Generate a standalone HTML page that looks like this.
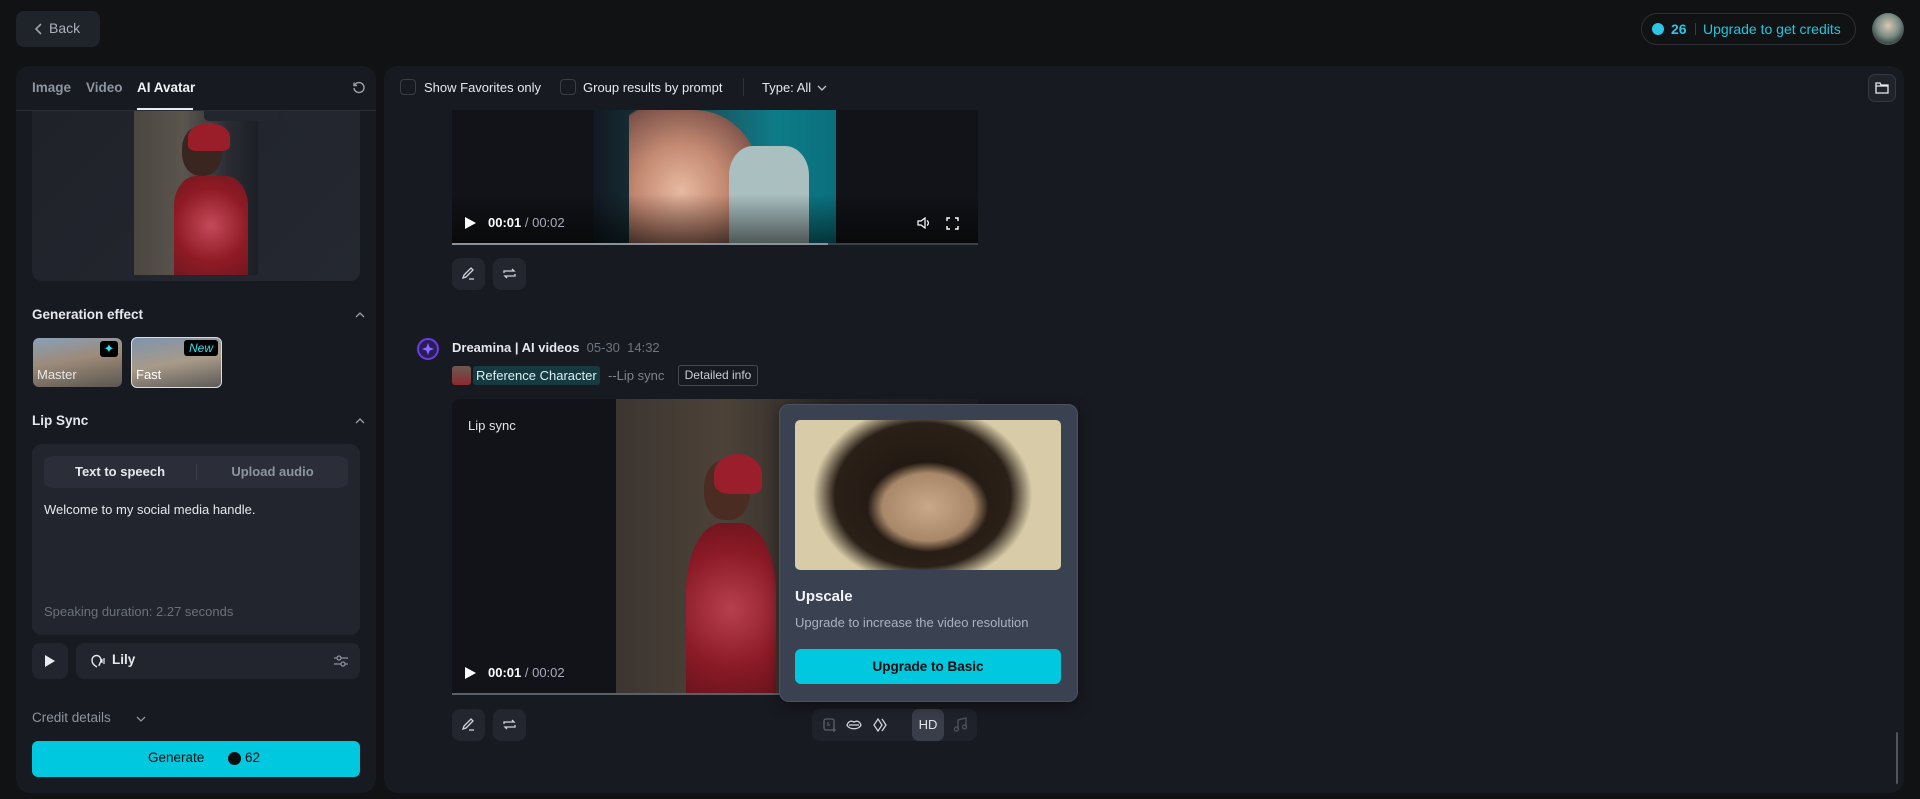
<!DOCTYPE html>
<html><head><meta charset="utf-8"><style>
*{box-sizing:border-box;margin:0;padding:0}
body{width:1920px;height:799px;background:#111214;font-family:"Liberation Sans",sans-serif;color:#e6e8ec;position:relative;overflow:hidden}
.a{position:absolute}
.t{white-space:nowrap}
.btn{background:#23262e;border-radius:8px}
svg{display:block}
</style></head><body>
<!-- back -->
<div class="a" style="left:16px;top:11px;width:84px;height:36px;background:#1f232a;border-radius:8px"></div>
<svg class="a" style="left:33px;top:22px" width="12" height="14" viewBox="0 0 12 14"><path d="M8 2L3 7l5 5" stroke="#9aa3ad" stroke-width="1.6" fill="none"/></svg>
<div class="a t" style="left:49px;top:20px;font-size:14px;color:#aab2bc">Back</div>
<!-- credits pill -->
<div class="a" style="left:1641px;top:13px;width:215px;height:32px;border:1px solid #2c2f36;border-radius:16px"></div>
<div class="a" style="left:1652px;top:23px;width:12px;height:12px;border-radius:50%;background:#2ec4e6"></div>
<div class="a t" style="left:1671px;top:21px;font-size:14px;font-weight:bold;color:#2ec4e6">26</div>
<div class="a" style="left:1695px;top:23px;width:1px;height:12px;background:#3a3d44"></div>
<div class="a t" style="left:1703px;top:21px;font-size:14px;color:#1ec8e0">Upgrade to get credits</div>
<div class="a" style="left:1872px;top:13px;width:32px;height:32px;border-radius:50%;background:radial-gradient(circle at 50% 40%,#d9c7b0 0,#7a8c84 45%,#3b4a48 70%,#bcd0c9 100%)"></div>

<!-- left panel -->
<div class="a" style="left:16px;top:66px;width:360px;height:727px;background:#181a21;border-radius:14px;overflow:hidden">
  <div class="a t" style="left:16px;top:14px;font-size:13.5px;font-weight:bold;color:#8c95a0">Image</div>
  <div class="a t" style="left:70px;top:14px;font-size:13.5px;font-weight:bold;color:#8c95a0">Video</div>
  <div class="a t" style="left:121px;top:14px;font-size:13.5px;font-weight:bold;color:#f0f2f5">AI Avatar</div>
  <div class="a" style="left:121px;top:42px;width:56px;height:2px;background:#e8ecf0"></div>
  <div class="a" style="left:0;top:44px;width:360px;height:1px;background:#2b2e36"></div>
  <svg class="a" style="left:336px;top:15px" width="14" height="14" viewBox="0 0 14 14"><path d="M3 3.5A5 5 0 1 1 2 7" stroke="#9aa3ad" stroke-width="1.4" fill="none"/><path d="M2 1.5v3h3" stroke="#9aa3ad" stroke-width="1.4" fill="none"/></svg>
  <div class="a" style="left:16px;top:45px;width:328px;height:170px;background:linear-gradient(135deg,#1f2229,#252831);border-radius:0 0 10px 10px"></div>
  <div class="a" style="left:118px;top:45px;width:124px;height:164px;background:linear-gradient(90deg,#4a4640 0,#5a564e 40%,#2a2d33 75%,#1c1f25 100%)"></div>
  <div class="a" style="left:166px;top:60px;width:40px;height:50px;border-radius:45%;background:#3a2620"></div>
  <div class="a" style="left:172px;top:57px;width:42px;height:28px;border-radius:50% 50% 20% 20%;background:#9a1e2a"></div>
  <div class="a" style="left:158px;top:110px;width:74px;height:99px;border-radius:30% 30% 0 0;background:radial-gradient(circle,#c44a5a 0,#8e1a24 60%,#701820 100%)"></div>
  <div class="a" style="left:188px;top:45px;width:74px;height:10px;background:#23262e;border-radius:0 0 5px 5px"></div>
  <div class="a" style="left:268px;top:45px;width:26px;height:10px;background:#23262e;border-radius:0 0 5px 5px"></div>

  <div class="a t" style="left:16px;top:241px;font-size:13.5px;font-weight:bold">Generation effect</div>
  <svg class="a" style="left:339px;top:245px" width="10" height="8"><path d="M1 6l4-4 4 4" stroke="#9aa3ad" stroke-width="1.3" fill="none"/></svg>
  <div class="a" style="left:17px;top:272px;width:89px;height:49px;border-radius:6px;background:linear-gradient(170deg,#8aa0b8 0,#9c8a78 45%,#5a5650 100%)"></div>
  <div class="a" style="left:84px;top:275px;width:18px;height:16px;background:#000;border-radius:3px;color:#2ee0f0;font-size:13px;text-align:center;line-height:16px">✦</div>
  <div class="a t" style="left:21px;top:301px;font-size:13px;color:#e8e8e8">Master</div>
  <div class="a" style="left:115px;top:271px;width:91px;height:51px;border-radius:6px;border:1.5px solid #d8dde3;background:linear-gradient(170deg,#7e94ae 0,#a89a88 50%,#5c5a58 100%)"></div>
  <div class="a t" style="left:168px;top:274px;width:34px;height:16px;background:#000;border-radius:3px;color:#2ee0f0;font-size:12px;font-style:italic;text-align:center;line-height:16px">New</div>
  <div class="a t" style="left:120px;top:301px;font-size:13px;color:#fff">Fast</div>

  <div class="a t" style="left:16px;top:347px;font-size:13.5px;font-weight:bold">Lip Sync</div>
  <svg class="a" style="left:339px;top:351px" width="10" height="8"><path d="M1 6l4-4 4 4" stroke="#9aa3ad" stroke-width="1.3" fill="none"/></svg>
  <div class="a" style="left:16px;top:378px;width:328px;height:191px;background:#22252d;border-radius:10px"></div>
  <div class="a" style="left:28px;top:390px;width:304px;height:32px;background:#2b2e38;border-radius:8px"></div>
  <div class="a" style="left:180px;top:398px;width:1px;height:16px;background:#3a3e48"></div>
  <div class="a t" style="left:28px;top:398px;width:152px;text-align:center;font-size:13px;font-weight:bold">Text to speech</div>
  <div class="a t" style="left:181px;top:398px;width:151px;text-align:center;font-size:13px;font-weight:bold;color:#8c95a0">Upload audio</div>
  <div class="a t" style="left:28px;top:436px;font-size:13px">Welcome to my social media handle.</div>
  <div class="a t" style="left:28px;top:538px;font-size:13px;color:#6a717c">Speaking duration: 2.27 seconds</div>
  <div class="a" style="left:16px;top:577px;width:36px;height:36px;background:#22252d;border-radius:8px"></div>
  <svg class="a" style="left:28px;top:589px" width="12" height="12"><path d="M1 0l10 6-10 6z" fill="#e8ecf0"/></svg>
  <div class="a" style="left:60px;top:577px;width:284px;height:36px;background:#22252d;border-radius:8px"></div>
  <svg class="a" style="left:72px;top:587px" width="18" height="16" viewBox="0 0 18 16"><path d="M9 14c-2-1-5-3-5-7a4.5 4.5 0 0 1 9 0c0 3-2 4-2 6" stroke="#e8ecf0" stroke-width="1.4" fill="none"/><path d="M14 6v4M16 5v6" stroke="#e8ecf0" stroke-width="1.2"/></svg>
  <div class="a t" style="left:96px;top:586px;font-size:13.5px;font-weight:bold">Lily</div>
  <svg class="a" style="left:317px;top:588px" width="16" height="14"><path d="M1 4h14M1 10h14" stroke="#8c95a0" stroke-width="1.2"/><circle cx="6" cy="4" r="2" fill="#22252d" stroke="#8c95a0" stroke-width="1.2"/><circle cx="10" cy="10" r="2" fill="#22252d" stroke="#8c95a0" stroke-width="1.2"/></svg>
  <div class="a t" style="left:16px;top:644px;font-size:13.5px;color:#8c95a0">Credit details</div>
  <svg class="a" style="left:120px;top:649px" width="10" height="8"><path d="M1 2l4 4 4-4" stroke="#8c95a0" stroke-width="1.3" fill="none"/></svg>
  <div class="a" style="left:16px;top:675px;width:328px;height:36px;background:#00c8de;border-radius:6px"></div>
  <div class="a t" style="left:132px;top:684px;font-size:13.5px;color:#0b0d10">Generate</div>
  <div class="a" style="left:212px;top:686px;width:13px;height:13px;border-radius:50%;background:#0b0d10"></div>
  <div class="a t" style="left:229px;top:684px;font-size:13.5px;color:#0b0d10">62</div>
</div>

<!-- main panel -->
<div class="a" style="left:384px;top:66px;width:1520px;height:727px;background:#181a21;border-radius:14px;overflow:hidden">
  <!-- top video -->
  <div class="a" style="left:68px;top:44px;width:526px;height:134px;background:#121318"></div>
  <div class="a" style="left:209px;top:44px;width:243px;height:134px;background:linear-gradient(90deg,#111820 0,#1d4a52 40%,#0e7c88 75%,#0a6f7c 100%)"></div>
  <div class="a" style="left:245px;top:44px;width:130px;height:134px;border-radius:0 50% 0 0;background:radial-gradient(ellipse at 40% 60%,#e8b8a0 0,#c48a72 40%,#7a5048 80%,transparent 82%)"></div>
  <div class="a" style="left:345px;top:80px;width:80px;height:98px;border-radius:30% 30% 0 0;background:#a9bfc0"></div>
  <div class="a" style="left:68px;top:128px;width:526px;height:50px;background:linear-gradient(180deg,transparent,rgba(0,0,0,.55))"></div>
  <svg class="a" style="left:81px;top:151px" width="11" height="12"><path d="M0 0l11 6-11 6z" fill="#fff"/></svg>
  <div class="a t" style="left:104px;top:149px;font-size:13px;font-weight:bold;color:#fff">00:01 <span style="font-weight:normal;color:#aab">/ 00:02</span></div>
  <svg class="a" style="left:533px;top:151px" width="14" height="12"><path d="M1 4h3l4-3v10l-4-3H1z" stroke="#fff" stroke-width="1.2" fill="none"/><path d="M10 3.5a3 3 0 0 1 0 5" stroke="#fff" stroke-width="1.2" fill="none"/></svg>
  <svg class="a" style="left:562px;top:151px" width="13" height="13"><path d="M1 4V1h3M9 1h3v3M12 9v3H9M4 12H1V9" stroke="#fff" stroke-width="1.4" fill="none"/></svg>
  <div class="a" style="left:68px;top:177px;width:526px;height:2px;background:#3a3f48"></div>
  <div class="a" style="left:68px;top:177px;width:376px;height:2px;background:#8a929c"></div>
  <div class="a btn" style="left:68px;top:192px;width:33px;height:32px"></div>
  <svg class="a" style="left:77px;top:200px" width="15" height="15"><path d="M2 12l1-3 7-7 2 2-7 7zM8 13h5" stroke="#d0d5dc" stroke-width="1.3" fill="none"/></svg>
  <div class="a btn" style="left:109px;top:192px;width:33px;height:32px"></div>
  <svg class="a" style="left:118px;top:200px" width="15" height="15"><path d="M2 7V5h10l-2-2M13 8v2H3l2 2" stroke="#d0d5dc" stroke-width="1.3" fill="none"/></svg>

  <!-- toolbar -->
  <div class="a" style="left:0;top:0;width:1520px;height:44px;background:#181a21"></div>
  <div class="a" style="left:16px;top:13px;width:16px;height:16px;border:1px solid #3a3e46;border-radius:4px"></div>
  <div class="a t" style="left:40px;top:14px;font-size:13px">Show Favorites only</div>
  <div class="a" style="left:176px;top:13px;width:16px;height:16px;border:1px solid #3a3e46;border-radius:4px"></div>
  <div class="a t" style="left:199px;top:14px;font-size:13px">Group results by prompt</div>
  <div class="a" style="left:359px;top:12px;width:1px;height:18px;background:#2e323a"></div>
  <div class="a t" style="left:378px;top:14px;font-size:13px">Type: All</div>
  <svg class="a" style="left:433px;top:18px" width="10" height="8"><path d="M1 2l4 4 4-4" stroke="#c0c6ce" stroke-width="1.3" fill="none"/></svg>
  <div class="a" style="left:1484px;top:8px;width:28px;height:28px;border:1px solid #353944;border-radius:7px;background:#20232a"></div>
  <svg class="a" style="left:1491px;top:15px" width="14" height="13"><path d="M1 2h4l1 2h7v8H1z M1 5h12" stroke="#e8ecf0" stroke-width="1.3" fill="none"/></svg>

  <!-- second item -->
  <div class="a" style="left:33px;top:272px;width:22px;height:22px;border-radius:50%;border:2px solid #6a3ee0;background:#2a1d5a"></div>
  <svg class="a" style="left:38px;top:277px" width="12" height="12"><path d="M6 0l1.6 4.4L12 6l-4.4 1.6L6 12 4.4 7.6 0 6l4.4-1.6z" fill="#8a6cff"/></svg>
  <div class="a t" style="left:68px;top:274px;font-size:13px;font-weight:bold">Dreamina | AI videos <span style="font-weight:normal;color:#6e7580">&nbsp;05-30&nbsp;&nbsp;14:32</span></div>
  <div class="a" style="left:68px;top:300px;width:19px;height:19px;border-radius:3px;background:linear-gradient(#6a5a50,#8a2a30)"></div>
  <div class="a t" style="left:89px;top:300px;width:127px;height:19px;background:#173a40;border-radius:3px;font-size:13px;line-height:19px;padding-left:3px;color:#d8f0f4">Reference Character</div>
  <div class="a t" style="left:224px;top:302px;font-size:13px;color:#7c8490">--Lip sync</div>
  <div class="a t" style="left:294px;top:299px;width:80px;height:21px;border:1px solid #444a54;border-radius:3px;font-size:12px;line-height:19px;text-align:center;color:#c8ced6">Detailed info</div>

  <div class="a" style="left:68px;top:333px;width:526px;height:296px;background:#121318;border-radius:8px 8px 0 0"></div>
  <div class="a" style="left:232px;top:333px;width:362px;height:296px;background:linear-gradient(90deg,#3c3530 0,#4c4238 30%,#2a2624 60%,#1d1e22 100%)"></div>
  <div class="a" style="left:302px;top:457px;width:90px;height:172px;border-radius:40% 40% 0 0;background:radial-gradient(circle,#b8404e 0,#8a1a26 60%,#6a141c 100%)"></div>
  <div class="a" style="left:320px;top:394px;width:46px;height:60px;border-radius:45%;background:#4a2c22"></div>
  <div class="a" style="left:330px;top:388px;width:48px;height:40px;border-radius:50% 50% 20% 30%;background:#9a1e2c"></div>
  <div class="a t" style="left:84px;top:352px;font-size:13px;color:#e0e4e8">Lip sync</div>
  <svg class="a" style="left:81px;top:601px" width="11" height="12"><path d="M0 0l11 6-11 6z" fill="#fff"/></svg>
  <div class="a t" style="left:104px;top:599px;font-size:13px;font-weight:bold;color:#fff">00:01 <span style="font-weight:normal;color:#aab">/ 00:02</span></div>
  <div class="a" style="left:68px;top:627px;width:526px;height:2px;background:#5a606a"></div>
  <div class="a btn" style="left:68px;top:643px;width:33px;height:32px"></div>
  <svg class="a" style="left:77px;top:651px" width="15" height="15"><path d="M2 12l1-3 7-7 2 2-7 7zM8 13h5" stroke="#d0d5dc" stroke-width="1.3" fill="none"/></svg>
  <div class="a btn" style="left:109px;top:643px;width:33px;height:32px"></div>
  <svg class="a" style="left:118px;top:651px" width="15" height="15"><path d="M2 7V5h10l-2-2M13 8v2H3l2 2" stroke="#d0d5dc" stroke-width="1.3" fill="none"/></svg>
  <div class="a" style="left:428px;top:643px;width:165px;height:32px;background:#1f222a;border-radius:8px"></div>
  <svg class="a" style="left:438px;top:651px" width="16" height="16"><rect x="2" y="2" width="10" height="11" rx="2" stroke="#5a606a" stroke-width="1.3" fill="none"/><path d="M6 5v3h2M12 11v4M10 13h4" stroke="#5a606a" stroke-width="1.3"/></svg>
  <svg class="a" style="left:461px;top:652px" width="18" height="14"><path d="M2 7c2-5 5-4 7-3 2-1 5-2 7 3-2 5-12 5-14 0z M4 7h10" stroke="#d0d5dc" stroke-width="1.3" fill="none"/></svg>
  <svg class="a" style="left:488px;top:651px" width="16" height="16"><path d="M6 2L2 8l4 6 4-6zM10 2l4 6-4 6" stroke="#d0d5dc" stroke-width="1.3" fill="none"/></svg>
  <div class="a" style="left:528px;top:643px;width:32px;height:32px;background:#3a3e4a;border-radius:7px;font-size:13px;color:#dfe3e8;text-align:center;line-height:32px">HD</div>
  <svg class="a" style="left:569px;top:651px" width="16" height="16"><path d="M5 12V3l8-2v9" stroke="#4e545e" stroke-width="1.3" fill="none"/><circle cx="3.5" cy="12" r="2" stroke="#4e545e" stroke-width="1.3" fill="none"/><circle cx="11.5" cy="10" r="2" stroke="#4e545e" stroke-width="1.3" fill="none"/></svg>

  <div class="a" style="left:1512px;top:666px;width:2px;height:52px;background:#50555e;border-radius:1px"></div>
</div>

<!-- popover -->
<div class="a" style="left:779px;top:404px;width:299px;height:298px;background:#3a4252;border-radius:10px;border:1px solid #4a5262;box-shadow:0 4px 14px rgba(0,0,0,.4)"></div>
<div class="a" style="left:795px;top:420px;width:266px;height:150px;border-radius:5px;background:radial-gradient(ellipse 38% 50% at 50% 58%,#c8a888 0,#a88868 45%,transparent 60%),radial-gradient(ellipse 55% 80% at 48% 50%,#1c140e 0,#2a2018 60%,transparent 75%),#d8cca8"></div>
<div class="a t" style="left:795px;top:588px;font-size:15px;font-weight:bold;color:#f2f4f7">Upscale</div>
<div class="a t" style="left:795px;top:615px;font-size:13px;color:#aab2be">Upgrade to increase the video resolution</div>
<div class="a" style="left:795px;top:649px;width:266px;height:35px;background:#00c8de;border-radius:6px;font-size:13.5px;font-weight:bold;color:#0b0d10;text-align:center;line-height:35px">Upgrade to Basic</div>
</body></html>
